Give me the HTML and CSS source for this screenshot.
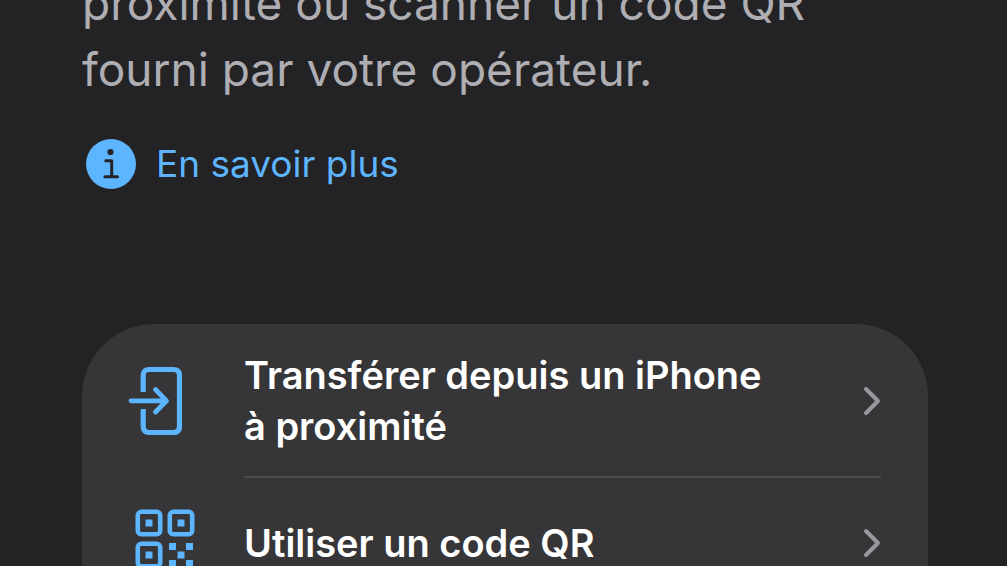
FILE: index.html
```html
<!DOCTYPE html>
<html lang="fr">
<head>
<meta charset="utf-8">
<meta name="viewport" content="width=device-width, initial-scale=1">
<title>Configurer une eSIM</title>
<link rel="stylesheet" href="styles.css">
</head>
<body>
<main class="page">
  <p class="intro">proximité ou scanner un code QR<br>fourni par votre opérateur.</p>
  <a class="more" href="#">
    <svg class="more-icon" viewBox="0 0 50 50" aria-hidden="true">
      <circle cx="25" cy="25" r="25" fill="#5eb5ff"/>
      <circle cx="24.5" cy="13" r="3.1" fill="#232325"/>
      <path d="M19.8 21.8h5.9v15.8M18.9 37.8h12.6" fill="none" stroke="#232325" stroke-width="3" stroke-linecap="round" stroke-linejoin="round"/>
    </svg>
    <span>En savoir plus</span>
  </a>
  <div class="card">
    <button class="row" type="button">
      <span class="row-icon">
        <svg class="icon-transfer" viewBox="0 0 54 70" aria-hidden="true">
          <g fill="none" stroke="#5eb5ff" stroke-width="5.2">
            <path d="M15.2 26V9.5q0-6 6-6h24.3q6 0 6 6v51q0 6-6 6H21.2q-6 0-6-6V43"/>
            <path d="M3 34.8h34M27.5 23.5L38.500 34.8L27.5 46" stroke-width="4.8" stroke-linecap="round" stroke-linejoin="round"/>
          </g>
        </svg>
      </span>
      <span class="row-body">
        <span class="row-label">Transférer depuis un iPhone<br>à proximité</span>
        <svg class="chevron" viewBox="0 0 18 30" aria-hidden="true"><path d="M3 3l12 12L3 27" fill="none" stroke="#98989d" stroke-width="4" stroke-linecap="round" stroke-linejoin="round"/></svg>
      </span>
    </button>
    <button class="row" type="button">
      <span class="row-icon">
        <svg class="icon-qr" viewBox="0 0 60 60" aria-hidden="true">
          <g fill="none" stroke="#5eb5ff" stroke-width="4.6">
            <rect x="2.8" y="2.8" width="22.4" height="22.4" rx="3.5"/>
            <rect x="34.8" y="2.8" width="22.4" height="22.4" rx="3.5"/>
            <rect x="2.8" y="34.8" width="22.4" height="22.4" rx="3.5"/>
          </g>
          <path fill="#5eb5ff" d="M10.500 10.500h7v7h-7zM42.500 10.500h7v7h-7zM10.500 42.500h7v7h-7zM34 34h7v7h-7zM51 34h7v7h-7zM42.500 42.500h7v7h-7zM34 51h7v7h-7zM51 51h7v7h-7z"/>
        </svg>
      </span>
      <span class="row-body">
        <span class="row-label">Utiliser un code QR</span>
        <svg class="chevron" viewBox="0 0 18 30" aria-hidden="true"><path d="M3 3l12 12L3 27" fill="none" stroke="#98989d" stroke-width="4" stroke-linecap="round" stroke-linejoin="round"/></svg>
      </span>
    </button>
  </div>
</main>
</body>
</html>
```
FILE: styles.css
```css
* {
  box-sizing: border-box;
}

html {
  height: 100%;
  overflow: hidden;
}

body {
  height: 100%;
  margin: 0;
  overflow: hidden;
  background: #232325;
  color: #fff;
  font-family: Inter, "Liberation Sans", sans-serif;
}

.page {
  display: flex;
  flex-direction: column;
  align-items: flex-start;
  padding: 0 79px 0 82px;
}

.intro {
  margin: -30px 0 0;
  color: #aeaeb3;
  font-size: 46px;
  line-height: 66px;
}

.more {
  display: flex;
  align-items: center;
  gap: 20px;
  margin: 36px 0 0 4px;
  color: #5eb5ff;
  font-size: 37px;
  line-height: 52px;
  text-decoration: none;
}

.more-icon {
  width: 50px;
  height: 50px;
}

.card {
  align-self: stretch;
  margin-top: 134px;
  padding-bottom: 80px;
  border-radius: 72px;
  background: #363638;
}

.row {
  display: flex;
  width: 100%;
  padding: 0 47px 0 0;
  border: 0;
  background: none;
  color: inherit;
  font: inherit;
  text-align: left;
}

.row-icon {
  display: flex;
  flex: none;
  align-items: center;
  justify-content: flex-start;
  align-self: stretch;
  width: 162px;
  padding-left: 46px;
}

.icon-transfer {
  width: 54px;
  height: 70px;
}

.icon-qr {
  width: 60px;
  height: 60px;
  margin: 0 0 8px 7px;
}

.row-body {
  display: flex;
  flex: 1;
  align-items: center;
  justify-content: space-between;
  min-height: 130px;
  padding: 24px 0;
}

.row:first-child .row-body {
  padding-top: 26px;
  border-bottom: 2px solid #4c4c4e;
}

.row-label {
  font-size: 38px;
  font-weight: 600;
  line-height: 51px;
}

.chevron {
  flex: none;
  width: 18px;
  height: 30px;
}
```
